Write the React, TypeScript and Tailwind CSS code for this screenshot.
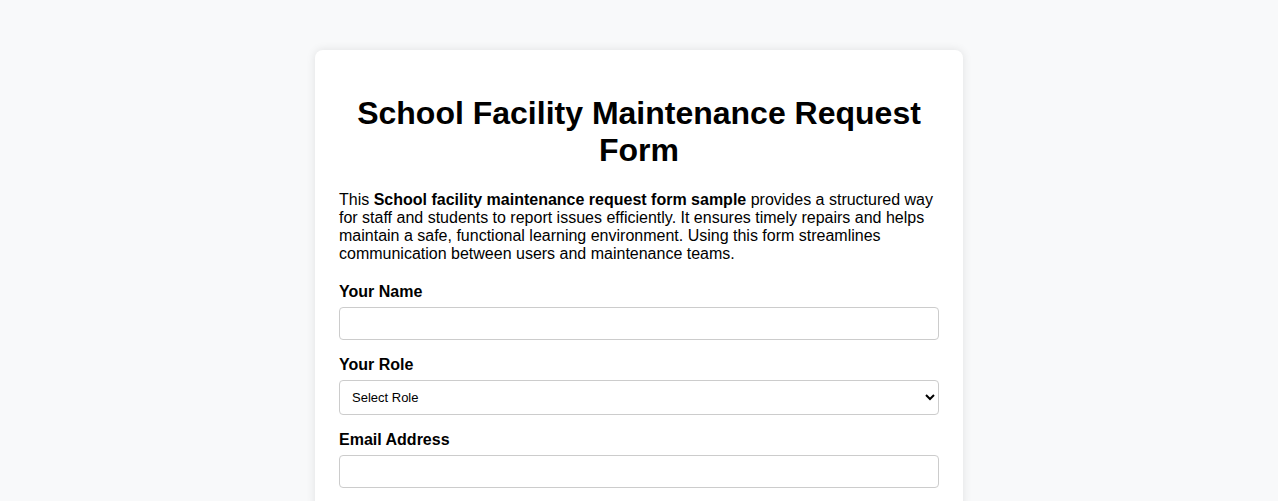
import React from "react";

export default function App() {
  return (
    <div className="min-h-screen bg-[#f8f9fa] pt-[50px] font-['Liberation_Sans',Arial,sans-serif] text-black">
      <div className="mx-auto w-[648px] rounded-lg bg-white p-6 shadow-[0_0_10px_rgba(0,0,0,0.1)]">
        <h1 className="mb-[22px] mt-[21px] text-center text-[32px] font-bold leading-[37px]">
          School Facility Maintenance Request Form
        </h1>
        <p className="mb-4 text-base leading-[18px]">
          This <strong>School facility maintenance request form sample</strong> provides a
          structured way for staff and students to report issues efficiently. It ensures timely
          repairs and helps maintain a safe, functional learning environment. Using this form
          streamlines communication between users and maintenance teams.
        </p>

        <form className="flex flex-col">
          {/* Name */}
          <label className="mb-[6px] mt-[4px] block text-base font-bold leading-[18px]">Your Name</label>
          <input
            type="text"
            className="h-[33px] w-full rounded border border-[#ccc] px-2 text-sm outline-none"
          />

          {/* Role */}
          <label className="mb-[6px] mt-[16px] block text-base font-bold leading-[18px]">Your Role</label>
          <select className="h-[35px] w-full rounded border border-[#ccc] bg-white px-2 text-[13px] outline-none">
            <option>Select Role</option>
            <option>Staff</option>
            <option>Student</option>
          </select>

          {/* Email */}
          <label className="mb-[6px] mt-[16px] block text-base font-bold leading-[18px]">Email Address</label>
          <input
            type="email"
            className="h-[33px] w-full rounded border border-[#ccc] px-2 text-sm outline-none"
          />
        </form>
      </div>
    </div>
  );
}
